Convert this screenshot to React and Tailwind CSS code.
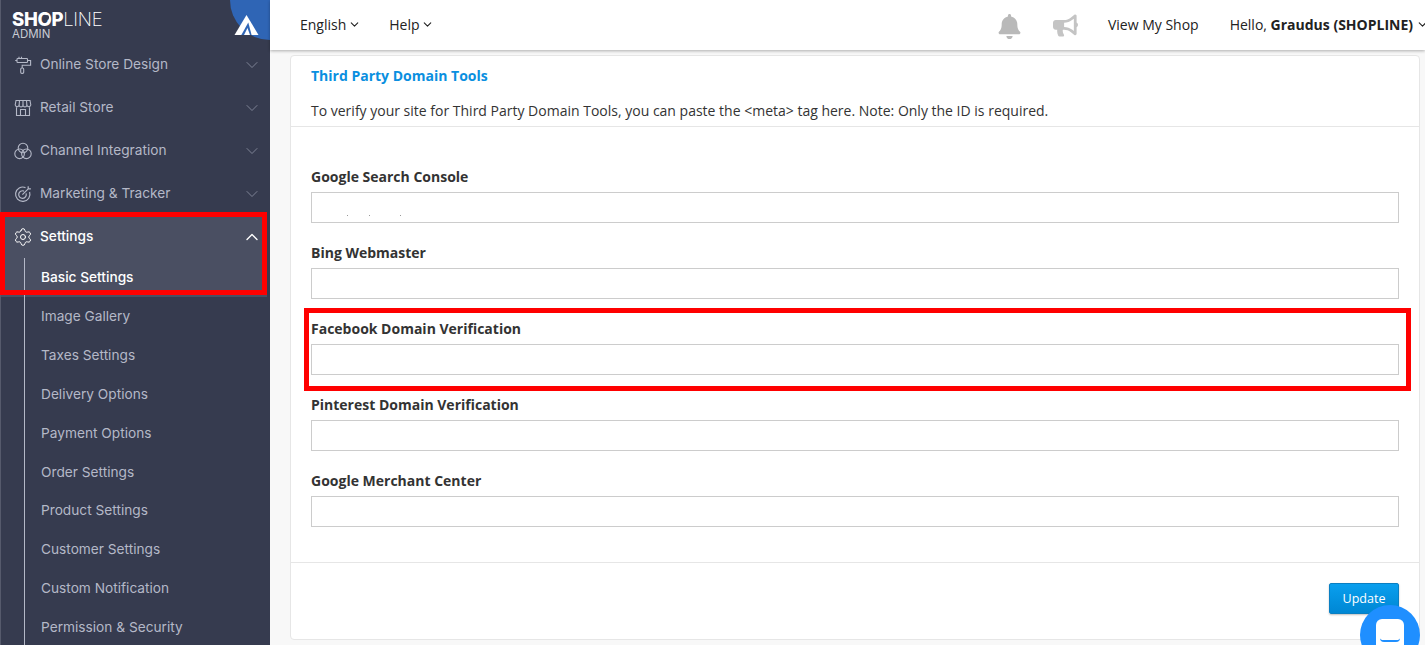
import { ChevronDown, ChevronUp, Settings } from "lucide-react";
import { FaBell, FaBullhorn } from "react-icons/fa";

const inter = "font-['Inter','Liberation_Sans',sans-serif]";

function RollerIcon() {
  return (
    <svg width="18" height="18" viewBox="0 0 18 18" fill="none" stroke="currentColor" strokeWidth="1.1">
      <rect x="3" y="2.5" width="10.5" height="4" rx="0.8" />
      <path d="M3 4.5H1.2M5 2.5V0.8M7.5 2.5V0.8" />
      <path d="M13.5 4.5H16.6V9.2H8.2V12" />
      <rect x="6.7" y="12" width="3" height="5.4" rx="1.2" />
    </svg>
  );
}

function StoreIcon() {
  return (
    <svg width="18" height="18" viewBox="0 0 18 18" fill="none" stroke="currentColor" strokeWidth="1.1">
      <path d="M2 1.5H16L16.8 6A2.1 2.1 0 0 1 12.9 6.6A2.1 2.1 0 0 1 9 6.6A2.1 2.1 0 0 1 5.1 6.6A2.1 2.1 0 0 1 1.2 6Z" />
      <path d="M5.5 1.5L5.1 6.6M9 1.5V6.6M12.5 1.5L12.9 6.6" />
      <path d="M2.5 8.2V16.5H15.5V8.2" />
      <path d="M6.5 16.5V10.5H11.5V16.5" />
    </svg>
  );
}

function ChannelIcon() {
  return (
    <svg width="18" height="18" viewBox="0 0 18 18" fill="none" stroke="currentColor" strokeWidth="1.1">
      <circle cx="9" cy="6" r="4.8" />
      <circle cx="5.6" cy="11.8" r="4.8" />
      <circle cx="12.4" cy="11.8" r="4.8" />
    </svg>
  );
}

function TargetIcon() {
  return (
    <svg width="18" height="18" viewBox="0 0 18 18" fill="none" stroke="currentColor" strokeWidth="1.2">
      <path d="M11.5 2.6A7.2 7.2 0 1 0 15.6 7" />
      <path d="M10 6.1A3.8 3.8 0 1 0 12.1 8.4" />
      <path d="M8.4 9.6L14.2 3.8M14.2 1.2V3.8H16.9" />
    </svg>
  );
}

const topItems = [
  { label: "Online Store Design", icon: <RollerIcon /> },
  { label: "Retail Store", icon: <StoreIcon /> },
  { label: "Channel Integration", icon: <ChannelIcon /> },
  { label: "Marketing & Tracker", icon: <TargetIcon /> },
];

const subItems = [
  "Image Gallery",
  "Taxes Settings",
  "Delivery Options",
  "Payment Options",
  "Order Settings",
  "Product Settings",
  "Customer Settings",
  "Custom Notification",
  "Permission & Security",
];

const fields = [
  "Google Search Console",
  "Bing Webmaster",
  "Facebook Domain Verification",
  "Pinterest Domain Verification",
  "Google Merchant Center",
];

function Sidebar() {
  return (
    <aside className={`w-[270px] shrink-0 bg-[#363b4f] border-l border-[#565a6c] text-[#b4b8c7] text-[13.7px] overflow-hidden ${inter}`}>
      {/* Logo */}
      <div className="relative h-[43px]">
        <div className="pl-[11px] pt-[10px] text-white leading-none">
          <div className="relative flex h-[18px] text-[18.5px] tracking-[-0.3px] leading-[18px]">
            <div className="font-extrabold">SHOP</div>
            <div className="font-extralight">LINE</div>
            <span className="absolute left-[33px] top-[5px] w-[4px] h-[5px] rounded-full bg-[#363b4f]" />
          </div>
          <div className="text-[11.5px] leading-[13px] text-[#c9cbd4]">ADMIN</div>
        </div>
        <div className="absolute left-[229px] -top-[40px] w-[80px] h-[80px] rounded-full bg-[#2f65b5]" />
        <svg className="absolute left-[233px] top-[15px]" width="25" height="21" viewBox="0 0 25 21">
          <path d="M12.5 0L24.5 20H0.5Z" fill="white" />
          <path d="M14.3 7.6L7.3 20H17.6Z" fill="#2f65b5" />
          <path d="M13.5 13L10 20H16Z" fill="white" />
        </svg>
      </div>

      {/* Menu */}
      {topItems.map((item) => (
        <div key={item.label} className="flex items-center h-[43px] pl-[13px] pr-[8px]">
          <span className="w-[26px] shrink-0">{item.icon}</span>
          <span className="flex-1">{item.label}</span>
          <ChevronDown size={20} strokeWidth={1} className="text-[#8d91a3]" />
        </div>
      ))}

      <div className="bg-[#4a4f62] text-white mr-[3px]">
        <div className="flex items-center h-[43px] pl-[12px] pr-[5px]">
          <span className="w-[27px] shrink-0">
            <Settings size={20} strokeWidth={1.2} />
          </span>
          <span className="flex-1 font-medium">Settings</span>
          <ChevronUp size={20} strokeWidth={1.6} />
        </div>
        <div className="flex items-center h-[39px] ml-[23px] pl-[16px] border-l border-[#b4b8c7] font-medium">
          Basic Settings
        </div>
      </div>
      <div className="ml-[23px] border-l border-[#b4b8c7]">
        {subItems.map((label) => (
          <div key={label} className="flex items-center h-[38.85px] pl-[16px]">
            {label}
          </div>
        ))}
      </div>
    </aside>
  );
}

function TopBar() {
  return (
    <header className="h-[50px] shrink-0 bg-white shadow-[0_1px_3px_rgba(0,0,0,0.3)] relative flex items-center pl-[30px] pb-[2px] text-[14px] text-[#222]">
      <span className="flex items-center gap-[2px]">
        English <ChevronDown size={13} />
      </span>
      <span className="flex items-center gap-[1px] ml-[28px]">
        Help <ChevronDown size={13} />
      </span>
      <div className="flex-1" />
      <FaBell size={25} className="text-[#b9b9b9] mt-[4px]" />
      <FaBullhorn size={25} className="text-[#c4c4c4] mt-[2px] ml-[31px]" />
      <span className="ml-[30px]">View My Shop</span>
      <span className="ml-[31px] -mr-[4px] flex items-center gap-[3px] whitespace-nowrap">
        <span>
          Hello, <b>Graudus (SHOPLINE)</b>
        </span>
        <ChevronDown size={13} />
      </span>
    </header>
  );
}

function Card() {
  return (
    <section className="h-[585px] bg-white border border-[#e6e6e6] rounded-[4px] flex flex-col text-[14px] text-[#333]">
      <div className="h-[71px] shrink-0 border-b border-[#e6e6e6] px-[20px]">
        <h2 className="pt-[10px] leading-[20px] font-bold text-[#0a8fe0]">Third Party Domain Tools</h2>
        <p className="pt-[15px] leading-[20px]">
          To verify your site for Third Party Domain Tools, you can paste the &lt;meta&gt; tag here. Note: Only the ID is required.
        </p>
      </div>
      <div className="flex-1 px-[20px] pt-[40px]">
        {fields.map((label, i) => (
          <div key={label} className="h-[76px]">
            <label className="block h-[25px] leading-[20px] font-bold">{label}</label>
            <div className="relative">
              <input type="text" className="block w-full h-[31px] border border-[#ccc] bg-white outline-none" />
              {i === 0 && (
                <>
                  <span className="absolute left-[36px] top-[23px] w-px h-px bg-[#999]" />
                  <span className="absolute left-[58px] top-[23px] w-px h-px bg-[#999]" />
                  <span className="absolute left-[89px] top-[23px] w-px h-px bg-[#999]" />
                </>
              )}
            </div>
          </div>
        ))}
      </div>
      <div className="h-[77px] shrink-0 border-t border-[#e6e6e6] flex justify-end items-start pt-[20px] pr-[20px]">
        <button className="w-[70px] h-[31px] pt-[1px] rounded-[2px] border border-[#0a7fc2] bg-gradient-to-b from-[#0a9fee] to-[#0087d4] text-white text-[12.5px] shadow-[0_1px_2px_rgba(0,0,0,0.25)]">
          Update
        </button>
      </div>
    </section>
  );
}

export default function App() {
  return (
    <div className="relative flex h-[645px] overflow-hidden bg-[#f8f8f8] font-['Open_Sans','Liberation_Sans',sans-serif]">
      <Sidebar />
      <main className="flex-1 min-w-0 flex flex-col">
        <TopBar />
        <div className="pl-[20px] pr-[5px] pt-[5px]">
          <Card />
        </div>
      </main>

      {/* Annotation boxes */}
      <div className="absolute left-0 top-[212px] w-[267px] h-[83px] border-[5px] border-[#ff0000]" />
      <div className="absolute left-[304px] top-[308px] w-[1107px] h-[83px] border-[5px] border-[#ff0000]" />

      {/* Chat bubble */}
      <div className="absolute left-[1360px] top-[605px] w-[60px] h-[60px] rounded-full bg-[#1f8fff]">
        <div className="absolute left-[16px] top-[14px] w-[28px] h-[34px] rounded-[6px] bg-white">
          <div className="absolute left-[4px] top-[19px] w-[20px] h-[4px] border-b-2 border-[#1f8fff] rounded-b-full" />
        </div>
      </div>
    </div>
  );
}
